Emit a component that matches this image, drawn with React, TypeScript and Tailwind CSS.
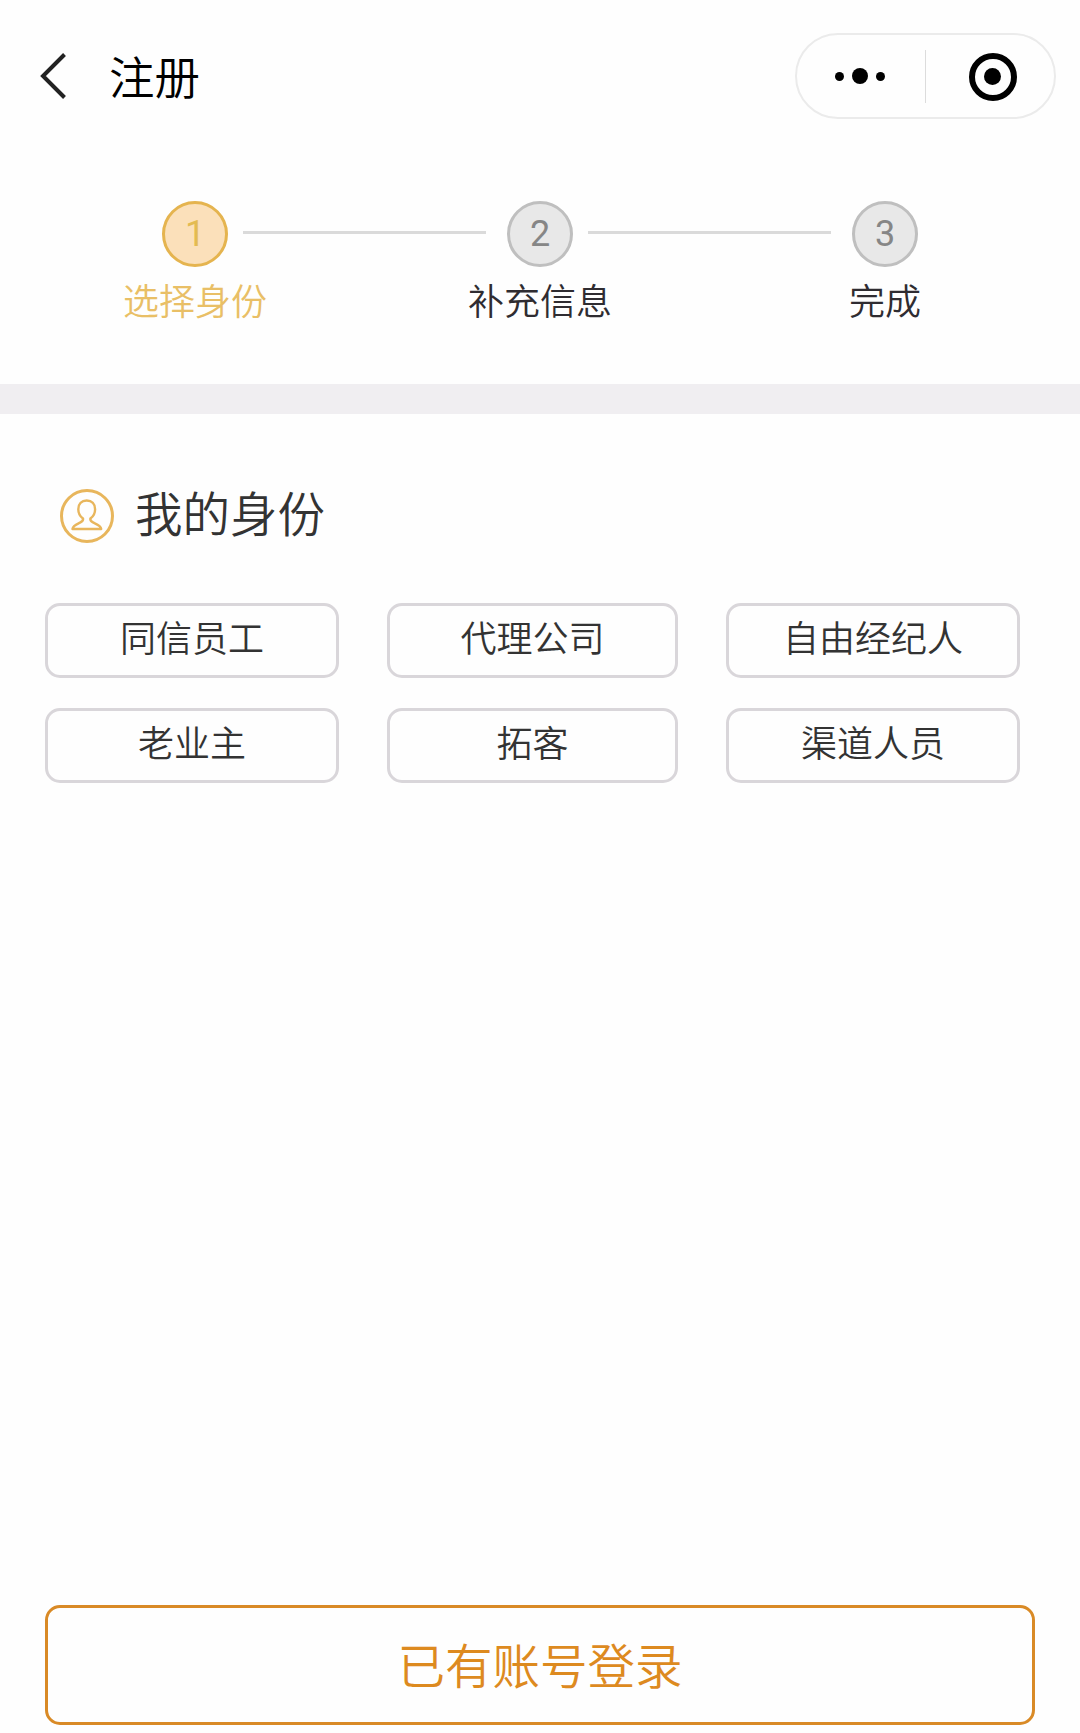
import { Fragment } from "react";

const steps = [
  { id: 1, label: "选择身份" },
  { id: 2, label: "补充信息" },
  { id: 3, label: "完成" },
];

const roles = ["同信员工", "代理公司", "自由经纪人", "老业主", "拓客", "渠道人员"];

function Header() {
  return (
    <header className="flex h-[153px] items-start justify-between pt-[33px] pr-6 pl-10">
      <div className="flex h-[86px] items-center">
        <button title="返回">
          <svg width="28" height="48" viewBox="0 0 28 48" fill="none" stroke="#222" strokeWidth="4" className="block">
            <path d="M24.500 2.500 3 24l21.500 21.500" />
          </svg>
        </button>
        <h1 className="ml-[41px] pb-0.5 text-[45.500px] leading-[60px] text-black">注册</h1>
      </div>

      {/* Mini program capsule */}
      <div className="flex h-[86px] w-[261px] items-center rounded-full border-2 border-[#ebebeb]">
        <button className="flex w-32 items-center justify-center gap-2 pr-0.5" title="更多">
          <span className="size-[9px] rounded-full bg-black" />
          <span className="size-4 rounded-full bg-black" />
          <span className="size-[9px] rounded-full bg-black" />
        </button>
        <span className="h-[53px] w-px bg-[#dcdcdc]" />
        <button className="flex flex-1 items-center justify-center pt-px pl-[5px]" title="关闭">
          <span className="flex size-12 items-center justify-center rounded-full border-[6px] border-black">
            <span className="size-[17px] rounded-full bg-black" />
          </span>
        </button>
      </div>
    </header>
  );
}

function Steps({ current }: { current: number }) {
  return (
    <div className="flex h-[231px] items-start justify-center pt-12">
      {steps.map((step, i) => {
        const active = step.id === current;
        return (
          <Fragment key={step.id}>
            {i > 0 && <div className="mt-[30px] mr-[21px] ml-[15px] h-[3px] w-[243px] shrink-0 bg-[#dadada]" />}
            <div className="flex w-[66px] shrink-0 flex-col items-center">
              <div
                className={`flex size-[66px] items-center justify-center rounded-full border-[3px] font-[Roboto] text-4xl leading-none font-normal ${
                  active ? "border-[#e5b44f] bg-[#fbe0ba] text-[#e3bb52]" : "border-[#bfbfbf] bg-[#e8e8e8] text-[#868686]"
                }`}
              >
                {step.id}
              </div>
              <span className={`mt-1.5 text-4xl leading-[52px] whitespace-nowrap ${active ? "text-[#e9bf66]" : "text-[#2f2c31]"}`}>
                {step.label}
              </span>
            </div>
          </Fragment>
        );
      })}
    </div>
  );
}

export default function App() {
  return (
    <div className="flex h-[1733px] w-[1080px] flex-col bg-[#fefefe] font-['Noto_Sans_CJK_SC',sans-serif] font-[350]">
      <Header />
      <Steps current={1} />
      <div className="h-[30px] bg-[#f0eef1]" />

      <main className="flex flex-1 flex-col pt-[66px] pb-2">
        <div className="flex h-[70px] items-center pl-[60px]">
          <svg width="54" height="54" viewBox="0 0 54 54" fill="none" stroke="#e8b65c" className="mt-px block">
            <circle cx="27" cy="27" r="25.5" strokeWidth="3" />
            <path
              strokeWidth="2.4"
              strokeLinejoin="round"
              d="M23 29.500c-2.800-2-4.700-5-4.700-9.300 0-5.500 3.300-8.700 8.400-8.700s8.400 3.200 8.400 8.700c0 4.300-1.900 7.300-4.700 9.300-.5 2.200.5 3 3 4.200 3.700 1.700 7.300 2.800 7.800 6.300H12.500c.5-3.500 4-4.600 7.500-6.300 2.500-1.200 3.500-2 3-4.200z"
            />
          </svg>
          <h2 className="ml-[21px] pb-[7px] text-[47.500px] leading-[63px] text-[#333]">我的身份</h2>
        </div>

        <div className="mt-[53px] grid grid-cols-[294px_291px_294px] justify-start gap-x-12 gap-y-[30px] pl-[45px]">
          {roles.map((role) => (
            <button
              key={role}
              className="flex h-[75px] items-center justify-center rounded-[15px] border-[3px] border-[#d9d6da] pb-[9px] text-4xl text-[#333]"
            >
              {role}
            </button>
          ))}
        </div>

        <button className="mt-auto mr-[45px] ml-[45px] flex h-30 items-center justify-center rounded-[15px] border-[3px] border-[#d98a26] pb-0.5 text-[47.500px] text-[#dd8a1f]">
          已有账号登录
        </button>
      </main>
    </div>
  );
}
